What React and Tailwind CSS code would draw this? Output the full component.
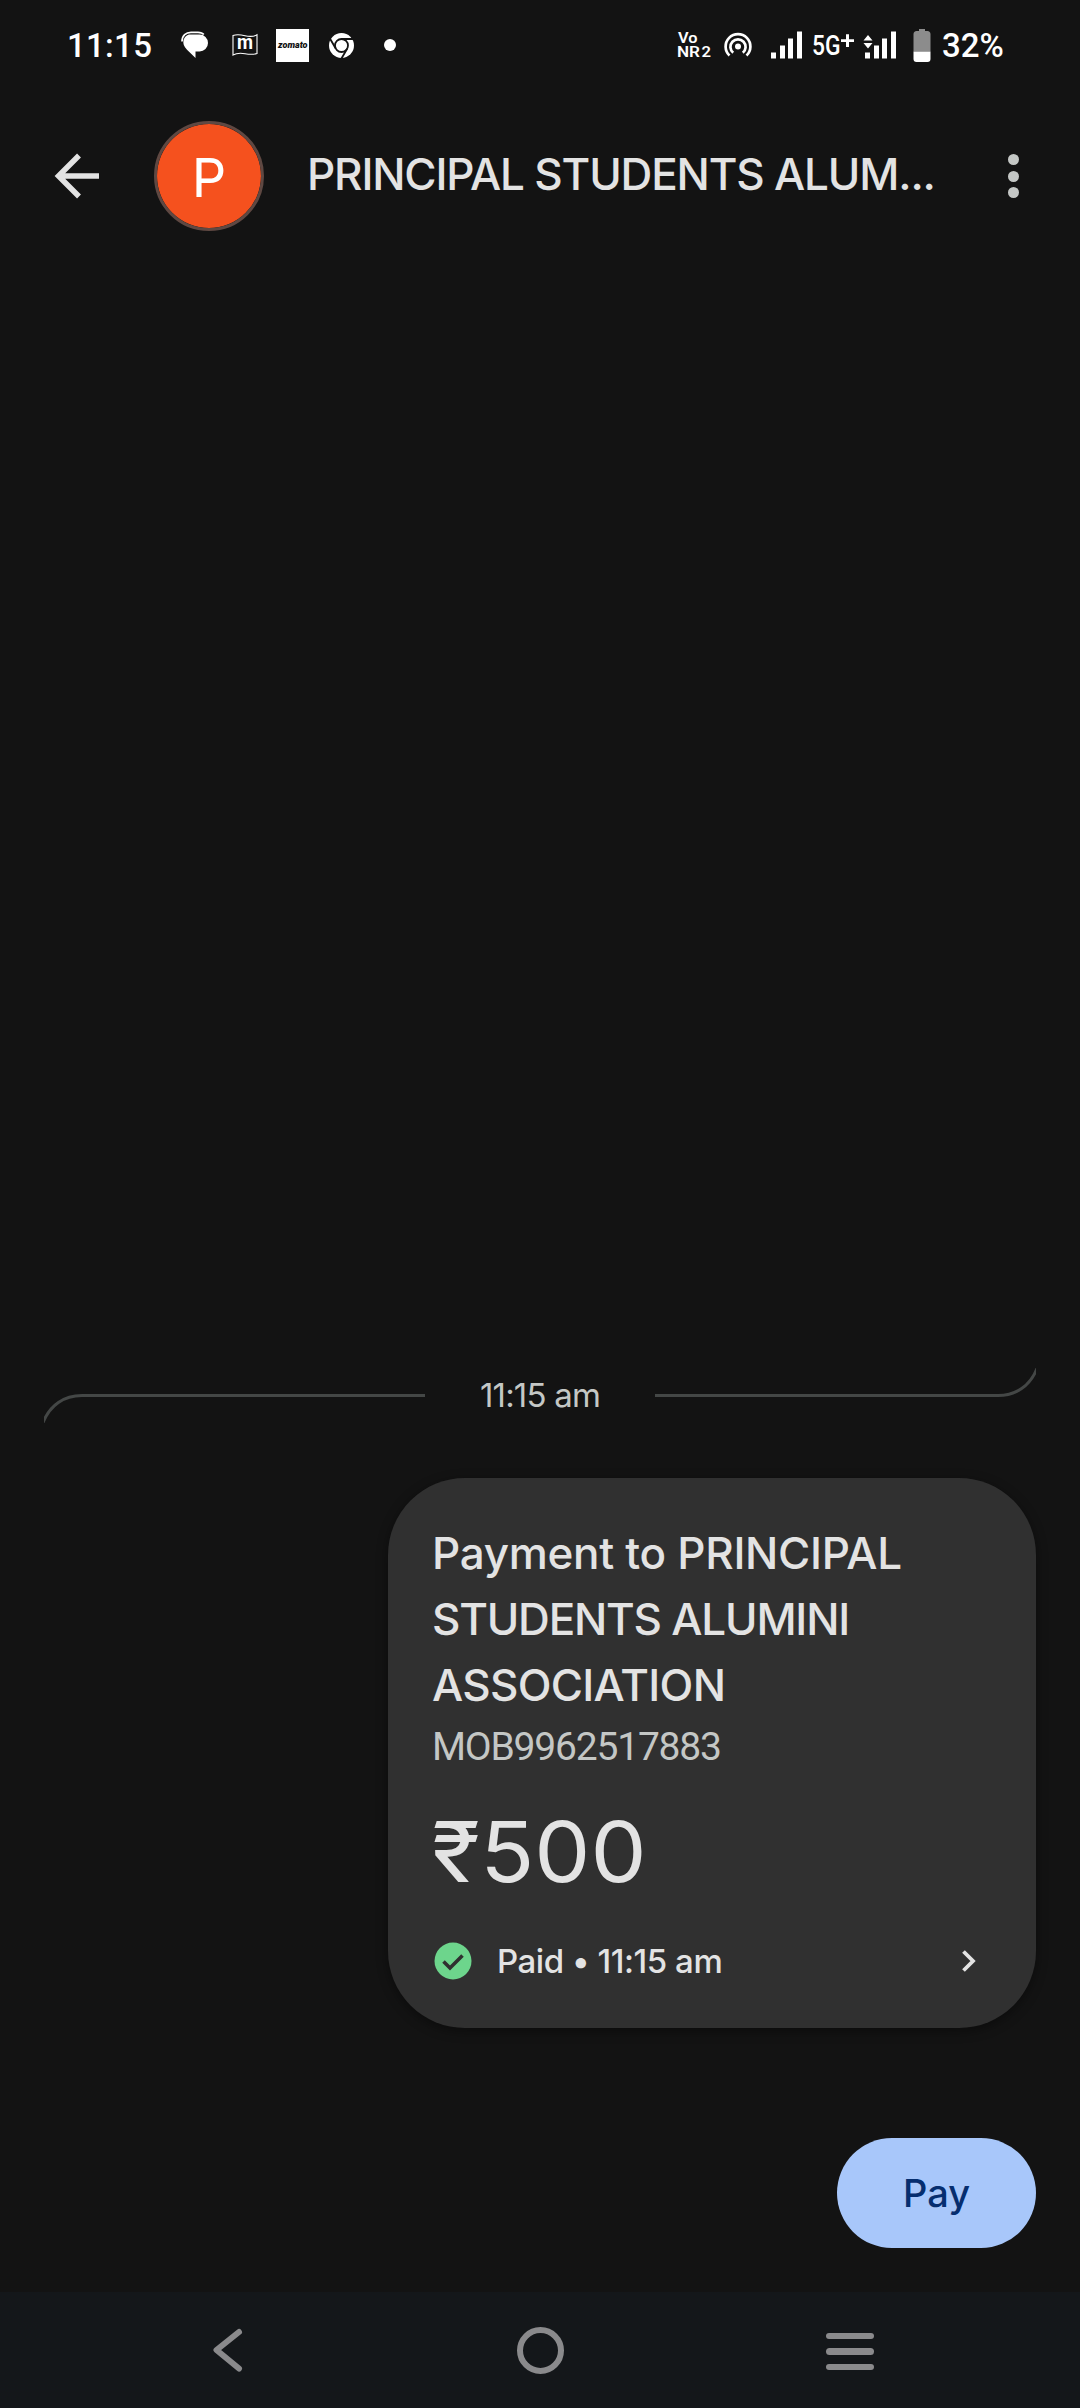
const signalBars = [
  { x: 0, height: 6 },
  { x: 9, height: 13 },
  { x: 17, height: 20 },
  { x: 26, height: 27 },
]

const SignalIcon = ({ className }) => (
  <svg className={className} width="32" height="28" viewBox="0 0 32 28" fill="#fff">
    {signalBars.map((bar) => (
      <rect key={bar.x} x={bar.x} y={27.5 - bar.height} width="5" height={bar.height} />
    ))}
  </svg>
)

const StatusBar = () => (
  <div className="flex h-[90px] items-center justify-between pl-[67px] pr-[77px] font-['Roboto',sans-serif] text-white">
    <div className="flex items-center">
      <span className="w-[114px] whitespace-nowrap text-[33px] font-medium leading-none tracking-[0.3px]">11:15</span>

      {/* Messages */}
      <svg width="28" height="28" viewBox="0 0 28 28" fill="#fff">
        <path d="M9 3.6h9.5A8.4 8.4 0 0 1 27 12a8.4 8.4 0 0 1-8.5 8.4h-4V27L6 18.8C2.800 15.6 1.9 12.6 2.5 9.6 3.3 6 6 3.6 9 3.6z" />
        <path d="M1 10.5C1 4.500 5 1.300 10 1.300h7c2.700 0 4.700.8 5.800 2.200" fill="none" stroke="#fff" strokeWidth="1.7" />
      </svg>

      {/* Flag with m */}
      <svg className="ml-[23px] overflow-visible" width="26" height="24" viewBox="0 0 26 24">
        <path
          d="M1 22V2.500c4-1.500 8-.8 12 .2s8 1.300 12-.9v18.700c-4 1.300-8 .9-12 .2S5 19.800 1 22z"
          fill="none"
          stroke="#fff"
          strokeWidth="1.1"
        />
        <text x="13" y="16" fill="#fff" fontSize="20" fontWeight="700" textAnchor="middle" fontFamily="Roboto, sans-serif" textLength="16" lengthAdjust="spacingAndGlyphs">m</text>
      </svg>

      {/* Zomato */}
      <svg className="ml-[18px]" width="33" height="33" viewBox="0 0 33 33">
        <rect width="33" height="33" fill="#fff" />
        <text x="2" y="18.800" fill="#111" fontSize="8.500" fontWeight="900" fontStyle="italic" fontFamily="Roboto, sans-serif" textLength="29.500" lengthAdjust="spacingAndGlyphs">zomato</text>
      </svg>

      {/* Chrome */}
      <svg className="ml-[19px]" width="27" height="27" viewBox="0 0 27 27">
        <circle cx="13.5" cy="13.5" r="12.5" fill="#fff" />
        <g stroke="#131313" strokeWidth="1.8" fill="none">
          <circle cx="13.5" cy="13.5" r="6.5" />
          <path d="M13.5 7h11.6M7.870 16.750 2.070 6.700M19.130 16.750 13.330 26.800" />
        </g>
      </svg>
      <span className="ml-[29px] size-3 rounded-full bg-white" />
    </div>

    <div className="flex items-center">
      {/* VoNR */}
      <svg className="overflow-visible" width="35" height="28" viewBox="0 0 35 28" fill="#fff" fontFamily="Roboto, sans-serif" fontWeight="600">
        <text x="1" y="11.500" fontSize="14" textLength="19.500" lengthAdjust="spacingAndGlyphs">Vo</text>
        <text x="0" y="25.500" fontSize="15.500" textLength="23" lengthAdjust="spacingAndGlyphs">NR</text>
        <text x="24.500" y="26" fontSize="14" textLength="9.500" lengthAdjust="spacingAndGlyphs">2</text>
      </svg>

      {/* Hotspot */}
      <svg className="ml-[11px]" width="30" height="28" viewBox="0 0 30 28" fill="none" stroke="#fff" strokeWidth="2.7">
        <circle cx="15" cy="15.5" r="3" fill="#fff" stroke="none" />
        <path d="M10.2 21.8a7.600 7.600 0 1 1 9.600 0" />
        <path d="M6.5 24.6a12.400 12.400 0 1 1 17 0" />
      </svg>

      <SignalIcon className="ml-[18px]" />
      <svg className="ml-[9px] overflow-visible" width="42" height="28" viewBox="0 0 42 28" fill="#fff" fontFamily="Roboto, sans-serif">
        <text x="0" y="24" fontSize="28.500" fontWeight="500" textLength="28.500" lengthAdjust="spacingAndGlyphs">5G</text>
        <path d="M34 3.300h3v5h5v2.800h-5v5h-3v-5h-5V8.300h5z" />
      </svg>
      <div className="relative ml-[11px]">
        <SignalIcon />
        <svg className="absolute left-[-2px] top-[4px]" width="10" height="14" viewBox="0 0 10 14" fill="#fff">
          <path d="M5 0l4.500 5.500h-9zM5 13.500.5 8h9z" />
        </svg>
      </div>

      {/* Battery */}
      <svg className="ml-[16px]" width="18" height="34" viewBox="0 0 18 34">
        <path d="M6 1h6v2h2a3 3 0 0 1 3.500 3v17.500H.5V6A3 3 0 0 1 4 3h2z" fill="#8c8c8c" />
        <path d="M.5 23.500h17V31a3 3 0 0 1-3 3h-11a3 3 0 0 1-3-3z" fill="#fff" />
      </svg>
      <span className="ml-[11px] w-[61px] whitespace-nowrap text-[33px] font-medium leading-none">32%</span>
    </div>
  </div>
)

const Header = () => (
  <header className="flex h-[172px] items-center pl-[54px] pr-[48px]">
    <svg width="46" height="46" viewBox="0 0 46 46" fill="none" stroke="#e3e3e3" strokeWidth="5.5">
      <path d="M45 23H5M25 2.500 4.500 23 25 43.500" />
    </svg>
    <div className="ml-[54px] flex size-[110px] items-center justify-center rounded-full border-[3px] border-[#5f4842] bg-[#f5511e] bg-clip-padding pt-[3px] text-[54px] leading-none text-white">
      P
    </div>
    <h1 className="ml-[43px] flex-1 whitespace-nowrap pb-1 text-[44px] font-medium leading-none tracking-[-1.16px]">
      PRINCIPAL STUDENTS ALUM...
    </h1>
    <div className="flex w-[38px] flex-col items-center gap-[5.5px]">
      <span className="size-[11px] rounded-full bg-[#c4c7c5]" />
      <span className="size-[11px] rounded-full bg-[#c4c7c5]" />
      <span className="size-[11px] rounded-full bg-[#c4c7c5]" />
    </div>
  </header>
)

const TimeDivider = () => (
  <div className="flex h-[60px] items-center justify-between px-[44px] text-[#c4c7c5]">
    <svg width="381" height="60" viewBox="0 0 381 60" fill="none" stroke="#444746" strokeWidth="3">
      <path d="M381 30.500H38C20 30.500 6 40 -1 57.500" />
    </svg>
    <span className="text-[33px] leading-none tracking-[-0.8px]">11:15 am</span>
    <svg width="381" height="60" viewBox="0 0 381 60" fill="none" stroke="#444746" strokeWidth="3">
      <path d="M0 30.500H343C361 30.500 375 21 382 3.500" />
    </svg>
  </div>
)

const PaymentCard = () => (
  <div className="flex h-[550px] w-[648px] flex-col rounded-[77px] bg-[#303030] px-[44px] pt-[42px] shadow-[0_3px_12px_rgba(0,0,0,0.4)]">
    <div className="whitespace-nowrap text-[44px] font-medium leading-[66px]">
      <p className="tracking-[-0.3px]">Payment to PRINCIPAL</p>
      <p className="tracking-[-1.2px]">STUDENTS ALUMINI</p>
      <p className="tracking-[-0.7px]">ASSOCIATION</p>
    </div>
    <p className="font-['Roboto',sans-serif] text-[39px] leading-[58px] tracking-[-1.2px] text-[#c4c7c5]">MOB9962517883</p>
    <p className="mt-[26px] origin-left scale-x-[1.06] text-[84px] leading-[100px]">₹500</p>
    <div className="mt-[29px] flex h-[60px] items-center">
      <svg className="ml-[2px]" width="38" height="38" viewBox="0 0 38 38">
        <circle cx="19" cy="19" r="18.5" fill="#6dd58c" />
        <path d="M9.500 19.500 16 26 28.500 13.500" fill="none" stroke="#303030" strokeWidth="3.6" />
      </svg>
      <span className="ml-[25px] flex-1 whitespace-nowrap text-[33px] font-medium leading-none tracking-[-0.45px]">
        Paid • 11:15 am
      </span>
      <svg className="mr-[15px]" width="16" height="24" viewBox="0 0 16 24" fill="none" stroke="#e3e3e3" strokeWidth="3.8">
        <path d="M2.500 2.500 12 12 2.500 21.500" />
      </svg>
    </div>
  </div>
)

const NavBar = () => (
  <nav className="flex h-[116px] items-center bg-[#14171a] pl-[212px]">
    <svg width="32" height="46" viewBox="0 0 32 46" fill="none" stroke="#8a8a8c" strokeWidth="6" strokeLinecap="round" strokeLinejoin="round">
      <path d="M27 5 4.500 23 27 41.500" />
    </svg>
    <div className="ml-[273px] size-[47px] rounded-full border-[6px] border-[#8a8a8c]" />
    <div className="ml-[262px] flex w-[48px] flex-col gap-[9px] pt-[3px]">
      <span className="h-[6.5px] rounded-full bg-[#8a8a8c]" />
      <span className="h-[6.5px] rounded-full bg-[#8a8a8c]" />
      <span className="h-[6.5px] rounded-full bg-[#8a8a8c]" />
    </div>
  </nav>
)

const App = () => {
  return (
    <div className="flex h-[2408px] w-[1080px] flex-col overflow-hidden bg-[#131313] font-['Inter',sans-serif] text-[#e3e3e3]">
      <StatusBar />
      <Header />
      <main className="flex flex-1 flex-col justify-end">
        <TimeDivider />
        <div className="mt-[53px] flex flex-col items-end pr-[44px]">
          <PaymentCard />
          <button className="mb-[44px] mt-[110px] h-[110px] w-[199px] rounded-full bg-[#a8c7fa] text-[38px] font-medium leading-none text-[#062e6f]">
            Pay
          </button>
        </div>
      </main>
      <NavBar />
    </div>
  )
}

export default App
